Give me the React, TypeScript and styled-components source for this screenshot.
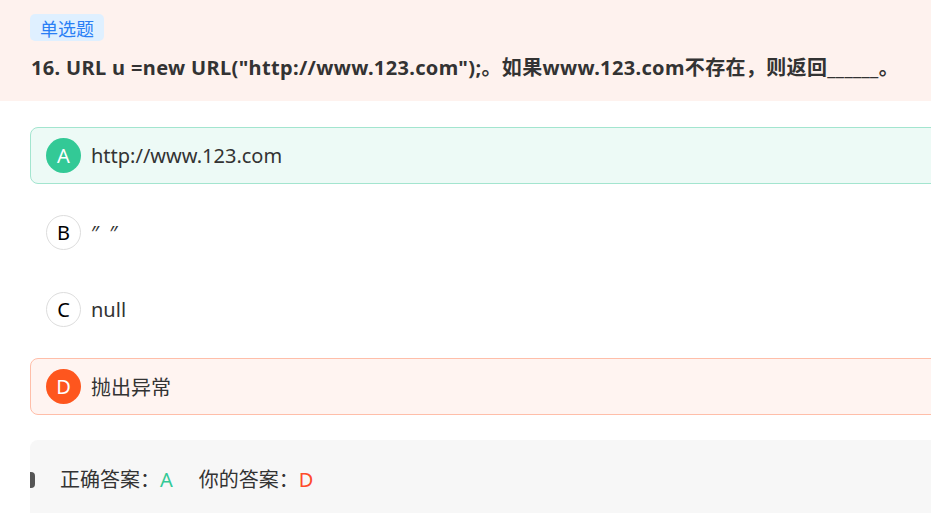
import styled, { createGlobalStyle } from 'styled-components';

const GlobalStyle = createGlobalStyle`
  html, body {
    margin: 0;
    padding: 0;
    background: #fff;
    overflow: hidden;
  }
  body {
    font-family: "Noto Sans", "Noto Sans CJK SC", sans-serif;
    color: #333;
  }
`;

const Page = styled.div`
  width: 980px;
`;

const Header = styled.header`
  background: #fef2ee;
  padding: 14px 30px 13px;
  height: 101px;
  box-sizing: border-box;
`;

const TypeTag = styled.span`
  display: inline-flex;
  align-items: center;
  height: 27px;
  padding: 0 10px;
  border-radius: 5px;
  background: #dff0ff;
  color: #2a7ff5;
  font-size: 18px;
`;

const Title = styled.h2`
  margin: 11px 0 0 1px;
  font-size: 20px;
  font-weight: 700;
  line-height: 32px;
  letter-spacing: 0.35px;
  color: #333;
  white-space: nowrap;
`;

const Options = styled.div`
  display: flex;
  flex-direction: column;
  gap: 20px;
  padding: 26px 0 0 30px;
`;

type Tone = 'right' | 'wrong' | 'plain';

const OptionRow = styled.div<{ $tone: Tone }>`
  display: flex;
  align-items: center;
  gap: 10px;
  height: 57px;
  box-sizing: border-box;
  padding: 0 15px;
  border-radius: 8px;
  border: 1px solid
    ${({ $tone }) =>
      $tone === 'right' ? '#a3e5cf' : $tone === 'wrong' ? '#ffbea9' : 'transparent'};
  background: ${({ $tone }) =>
    $tone === 'right' ? '#edfaf6' : $tone === 'wrong' ? '#fff4f1' : '#fff'};
`;

const Letter = styled.span<{ $tone: Tone }>`
  width: 35px;
  height: 35px;
  flex: none;
  border-radius: 50%;
  box-sizing: border-box;
  display: flex;
  align-items: center;
  justify-content: center;
  font-size: 20px;
  border: 1px solid ${({ $tone }) => ($tone === 'plain' ? '#dddddd' : 'transparent')};
  background: ${({ $tone }) =>
    $tone === 'right' ? '#33c996' : $tone === 'wrong' ? '#fe561e' : '#fff'};
  color: ${({ $tone }) => ($tone === 'plain' ? '#000' : '#fff')};
`;

const OptionText = styled.span`
  font-size: 20px;
  color: #333;
`;

const Result = styled.div`
  position: relative;
  margin: 25px 0 0 30px;
  height: 90px;
  border-radius: 8px 0 0 0;
  background: #f7f7f7;
  display: flex;
  align-items: flex-start;
  padding: 27px 0 0 30px;
  box-sizing: border-box;
  font-size: 20px;
  color: #333;

  &::before {
    content: '';
    position: absolute;
    left: 0;
    top: 32px;
    width: 5px;
    height: 16px;
    border-radius: 0 4px 4px 0;
    background: #555;
  }
`;

const ResultItem = styled.span`
  margin-right: 26px;
  line-height: 26px;
`;

const Mark = styled.span<{ $ok: boolean }>`
  color: ${({ $ok }) => ($ok ? '#33c996' : '#fe4b2b')};
`;

const options: { key: string; text: string; tone: Tone }[] = [
  { key: 'A', text: 'http://www.123.com', tone: 'right' },
  { key: 'B', text: '″\u00a0\u00a0″', tone: 'plain' },
  { key: 'C', text: 'null', tone: 'plain' },
  { key: 'D', text: '抛出异常', tone: 'wrong' },
];

export default function App() {
  return (
    <Page>
      <GlobalStyle />
      <Header>
        <TypeTag>单选题</TypeTag>
        <Title>16. URL u =new URL("http://www.123.com");。如果www.123.com不存在，则返回______。</Title>
      </Header>
      <Options>
        {options.map((o) => (
          <OptionRow key={o.key} $tone={o.tone}>
            <Letter $tone={o.tone}>{o.key}</Letter>
            <OptionText>{o.text}</OptionText>
          </OptionRow>
        ))}
      </Options>
      <Result>
        <ResultItem>
          正确答案：<Mark $ok>A</Mark>
        </ResultItem>
        <ResultItem>
          你的答案：<Mark $ok={false}>D</Mark>
        </ResultItem>
      </Result>
    </Page>
  );
}
